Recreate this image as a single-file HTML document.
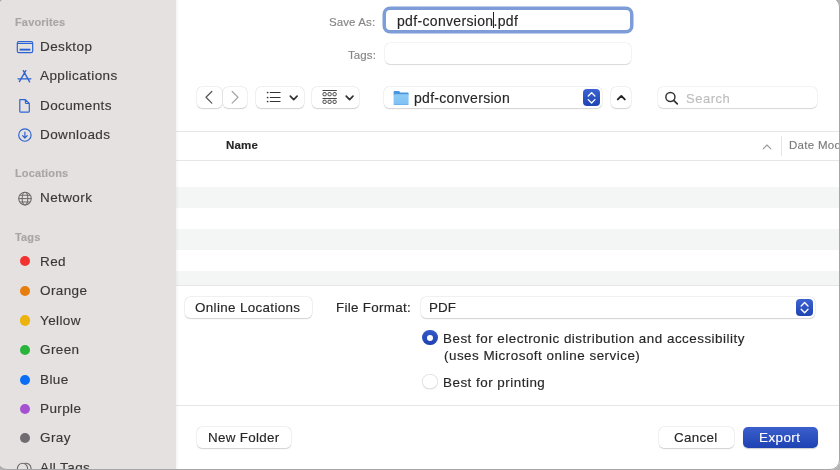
<!DOCTYPE html>
<html><head><meta charset="utf-8">
<style>
*{margin:0;padding:0;box-sizing:border-box}
html,body{width:840px;height:470px;overflow:hidden;background:#fff}
body{font-family:"Liberation Sans",sans-serif;position:relative}
.t{position:absolute;white-space:nowrap;will-change:transform;-webkit-text-stroke:0.15px currentColor}
.fld{position:absolute;background:#fff;border-radius:5px;box-shadow:0 0 0 0.5px rgba(0,0,0,0.07),0 0.7px 1px rgba(0,0,0,0.13)}
.btn{position:absolute;background:#fff;border-radius:5px;box-shadow:0 0 0 0.5px rgba(0,0,0,0.08),0 0.8px 1.2px rgba(0,0,0,0.15)}
.hl{position:absolute;left:176px;width:664px;height:1px;background:#e6e6e6}
.stripe{position:absolute;left:176px;width:664px;height:21px;background:#f4f5f5}
</style></head><body>
<div style="position:absolute;left:0;top:0;width:176px;height:470px;background:#e6e1e1"></div><div class="t" style="left:15.00px;top:17.19px;font-size:11px;line-height:11px;color:#a9a5a5;font-weight:bold;letter-spacing:0.15px;">Favorites</div>
<div class="t" style="left:15.00px;top:168.29px;font-size:11px;line-height:11px;color:#a9a5a5;font-weight:bold;letter-spacing:0.15px;">Locations</div>
<div class="t" style="left:15.00px;top:232.09px;font-size:11px;line-height:11px;color:#a9a5a5;font-weight:bold;letter-spacing:0.15px;">Tags</div>
<div class="t" style="left:39.50px;top:40.27px;font-size:13.5px;line-height:13.5px;color:#3b3737;font-weight:normal;letter-spacing:0.4px;">Desktop</div>
<div class="t" style="left:39.50px;top:69.37px;font-size:13.5px;line-height:13.5px;color:#3b3737;font-weight:normal;letter-spacing:0.4px;">Applications</div>
<div class="t" style="left:39.50px;top:98.97px;font-size:13.5px;line-height:13.5px;color:#3b3737;font-weight:normal;letter-spacing:0.4px;">Documents</div>
<div class="t" style="left:39.50px;top:128.37px;font-size:13.5px;line-height:13.5px;color:#3b3737;font-weight:normal;letter-spacing:0.4px;">Downloads</div>
<div class="t" style="left:39.50px;top:191.37px;font-size:13.5px;line-height:13.5px;color:#3b3737;font-weight:normal;letter-spacing:0.4px;">Network</div>
<div class="t" style="left:39.50px;top:254.57px;font-size:13.5px;line-height:13.5px;color:#3b3737;font-weight:normal;letter-spacing:0.4px;">Red</div>
<div style="position:absolute;left:19.6px;top:256.30px;width:10.2px;height:10.2px;border-radius:50%;background:#f2322e"></div><div class="t" style="left:39.50px;top:284.47px;font-size:13.5px;line-height:13.5px;color:#3b3737;font-weight:normal;letter-spacing:0.4px;">Orange</div>
<div style="position:absolute;left:19.6px;top:286.20px;width:10.2px;height:10.2px;border-radius:50%;background:#e77d0c"></div><div class="t" style="left:39.50px;top:313.67px;font-size:13.5px;line-height:13.5px;color:#3b3737;font-weight:normal;letter-spacing:0.4px;">Yellow</div>
<div style="position:absolute;left:19.6px;top:315.40px;width:10.2px;height:10.2px;border-radius:50%;background:#ebb30b"></div><div class="t" style="left:39.50px;top:343.27px;font-size:13.5px;line-height:13.5px;color:#3b3737;font-weight:normal;letter-spacing:0.4px;">Green</div>
<div style="position:absolute;left:19.6px;top:345.00px;width:10.2px;height:10.2px;border-radius:50%;background:#28b53a"></div><div class="t" style="left:39.50px;top:372.77px;font-size:13.5px;line-height:13.5px;color:#3b3737;font-weight:normal;letter-spacing:0.4px;">Blue</div>
<div style="position:absolute;left:19.6px;top:374.50px;width:10.2px;height:10.2px;border-radius:50%;background:#0b6cf6"></div><div class="t" style="left:39.50px;top:402.07px;font-size:13.5px;line-height:13.5px;color:#3b3737;font-weight:normal;letter-spacing:0.4px;">Purple</div>
<div style="position:absolute;left:19.6px;top:403.80px;width:10.2px;height:10.2px;border-radius:50%;background:#a54fd1"></div><div class="t" style="left:39.50px;top:431.37px;font-size:13.5px;line-height:13.5px;color:#3b3737;font-weight:normal;letter-spacing:0.4px;">Gray</div>
<div style="position:absolute;left:19.6px;top:433.10px;width:10.2px;height:10.2px;border-radius:50%;background:#706b71"></div><div class="t" style="left:39.50px;top:460.57px;font-size:13.5px;line-height:13.5px;color:#3b3737;font-weight:normal;letter-spacing:0.4px;">All Tags</div>

<svg style="position:absolute;left:16px;top:40px" width="18" height="14" viewBox="0 0 18 14"><rect x="1.3" y="1.6" width="15.4" height="11" rx="1.6" fill="none" stroke="#2b64d2" stroke-width="1.2"/><line x1="1.3" y1="3.5" x2="16.7" y2="3.5" stroke="#2b64d2" stroke-width="1"/><rect x="3.6" y="8.7" width="10.8" height="1.9" fill="#2b64d2"/></svg>
<svg style="position:absolute;left:16px;top:68px" width="18" height="16" viewBox="0 0 18 16"><path d="M7.3 2.6 L13.6 13.8 M9.8 2.6 L3.4 13.6 M2 10.8 H14.9" fill="none" stroke="#2b64d2" stroke-width="1.35" stroke-linecap="round"/></svg>
<svg style="position:absolute;left:17px;top:98px" width="16" height="17" viewBox="0 0 16 17"><path d="M2.8 1.6 H8.4 L12.3 5.5 V13.2 Q12.3 14.2 11.3 14.2 H3.8 Q2.8 14.2 2.8 13.2 Z M8.4 1.6 V4.5 Q8.4 5.5 9.4 5.5 H12.3" fill="none" stroke="#2b64d2" stroke-width="1.2" stroke-linejoin="round"/></svg>
<svg style="position:absolute;left:17px;top:128px" width="16" height="16" viewBox="0 0 16 16"><circle cx="7.9" cy="7.0" r="6.2" fill="none" stroke="#2b64d2" stroke-width="1.15"/><path d="M7.9 4.0 V10.0 M5.6 7.7 L7.9 10.0 L10.2 7.7" fill="none" stroke="#2b64d2" stroke-width="1.2" stroke-linecap="round" stroke-linejoin="round"/></svg>
<svg style="position:absolute;left:17px;top:191px" width="16" height="16" viewBox="0 0 16 16"><g fill="none" stroke="#6d6969" stroke-width="1.05"><circle cx="8" cy="7.6" r="6.3"/><ellipse cx="8" cy="7.6" rx="2.8" ry="6.3"/><line x1="1.7" y1="7.6" x2="14.3" y2="7.6"/><path d="M2.8 4.3 H13.2 M2.8 10.9 H13.2"/></g></svg>
<svg style="position:absolute;left:16px;top:461px" width="18" height="12" viewBox="0 0 18 12"><g fill="none" stroke="#6d6969" stroke-width="1.1"><circle cx="6.5" cy="7.4" r="5.1"/><path d="M8.25 2.6 A5.1 5.1 0 1 1 8.25 12.2"/></g></svg>
<div class="t" style="right:464.50px;top:16.67px;font-size:11.5px;line-height:11.5px;color:#858585;font-weight:normal;letter-spacing:0.1px;">Save As:</div>
<div class="t" style="right:464.50px;top:49.57px;font-size:11.5px;line-height:11.5px;color:#858585;font-weight:normal;letter-spacing:0.1px;">Tags:</div>
<div style="position:absolute;left:386px;top:10px;width:244px;height:20px;border-radius:4px;background:#fff;box-shadow:0 0 0 3.5px #7e9cd7"></div><div class="t" style="left:397.00px;top:13.85px;font-size:14px;line-height:14px;color:#262626;font-weight:normal;letter-spacing:0.33px;">pdf-conversion.pdf</div>
<div style="position:absolute;left:493px;top:12px;width:1px;height:16px;background:#222"></div><div class="fld" style="left:385.3px;top:42.5px;width:245.4px;height:21.9px"></div><div class="btn" style="left:197px;top:87px;width:24.5px;height:21.3px"></div><div class="btn" style="left:223px;top:87px;width:24.3px;height:21.3px"></div><svg style="position:absolute;left:197px;top:87px" width="51" height="22" viewBox="0 0 51 22"><path d="M14.8 4.5 L9 10.3 L14.8 16.1" fill="none" stroke="#5a5a5a" stroke-width="1.3" stroke-linecap="round" stroke-linejoin="round"/><path d="M35.2 4.5 L41 10.3 L35.2 16.1" fill="none" stroke="#a8a8a8" stroke-width="1.3" stroke-linecap="round" stroke-linejoin="round"/></svg><div class="btn" style="left:255.5px;top:87px;width:48px;height:21.2px"></div><svg style="position:absolute;left:255.5px;top:87px" width="48" height="22" viewBox="0 0 48 22"><g fill="#333"><circle cx="11.6" cy="5.5" r="0.85"/><circle cx="11.6" cy="10.5" r="0.85"/><circle cx="11.6" cy="14.5" r="0.85"/></g><g stroke="#333" stroke-width="1.05"><line x1="13.8" y1="5.5" x2="24.5" y2="5.5"/><line x1="13.8" y1="10.5" x2="24.5" y2="10.5"/><line x1="13.8" y1="14.5" x2="24.5" y2="14.5"/></g><path d="M34.3 9.2 L37.7 12.6 L41.1 9.2" fill="none" stroke="#333" stroke-width="1.7" stroke-linecap="round" stroke-linejoin="round"/></svg><div class="btn" style="left:311.7px;top:87px;width:47.6px;height:21.2px"></div><svg style="position:absolute;left:311.7px;top:87px" width="48" height="22" viewBox="0 0 48 22"><g fill="none" stroke="#333" stroke-width="0.9"><line x1="10.5" y1="3.5" x2="24.8" y2="3.5"/><line x1="10.5" y1="11.5" x2="24.8" y2="11.5"/><rect x="11" y="5.6" width="3.2" height="3.2" rx="1"/><rect x="16" y="5.6" width="3.2" height="3.2" rx="1"/><rect x="21" y="5.6" width="3.2" height="3.2" rx="1"/><rect x="11" y="13.2" width="3.2" height="3.2" rx="1"/><rect x="16" y="13.2" width="3.2" height="3.2" rx="1"/><rect x="21" y="13.2" width="3.2" height="3.2" rx="1"/></g><path d="M34.2 9.2 L37.6 12.6 L41 9.2" fill="none" stroke="#333" stroke-width="1.7" stroke-linecap="round" stroke-linejoin="round"/></svg><div class="btn" style="left:384.2px;top:87.3px;width:217.6px;height:21px"></div><svg style="position:absolute;left:393px;top:90px" width="17" height="16" viewBox="0 0 17 16"><defs><linearGradient id="fg" x1="0" y1="0" x2="0" y2="1"><stop offset="0" stop-color="#8ecbf6"/><stop offset="0.85" stop-color="#80c2f4"/><stop offset="1" stop-color="#62aaea"/></linearGradient></defs><path d="M0.6 2 Q0.6 1 1.6 1 H5.6 Q6.2 1 6.6 1.5 L7.4 2.4 H14.6 Q15.6 2.4 15.6 3.4 V5 H0.6 Z" fill="#4b95df"/><rect x="0.6" y="4.3" width="15" height="10.8" rx="0.9" fill="url(#fg)"/></svg><div class="t" style="left:414.00px;top:90.85px;font-size:14px;line-height:14px;color:#262626;font-weight:normal;letter-spacing:0.3px;">pdf-conversion</div>
<div style="position:absolute;left:582.9px;top:89.2px;width:17.1px;height:17.1px;border-radius:4px;background:linear-gradient(#3c63d2,#1f44b4)"></div><svg style="position:absolute;left:582.9px;top:89.2px" width="18" height="18" viewBox="0 0 18 18"><path d="M5.3 7 L8.6 3.6 L11.9 7 M5.3 10.6 L8.6 14 L11.9 10.6" fill="none" stroke="#fff" stroke-width="1.35" stroke-linecap="round" stroke-linejoin="round"/></svg><div class="btn" style="left:610.8px;top:87.1px;width:20.5px;height:21.2px"></div><svg style="position:absolute;left:610.8px;top:87.1px" width="21" height="22" viewBox="0 0 21 22"><path d="M6.8 12.4 L10.3 8.9 L13.8 12.4" fill="none" stroke="#222" stroke-width="1.9" stroke-linecap="round" stroke-linejoin="round"/></svg><div class="fld" style="left:657.5px;top:87.4px;width:159.5px;height:20.9px"></div><svg style="position:absolute;left:660px;top:88px" width="22" height="20" viewBox="0 0 22 20"><circle cx="10.4" cy="9" r="4.55" fill="none" stroke="#333" stroke-width="1.45"/><line x1="13.7" y1="12.3" x2="17.3" y2="15.9" stroke="#333" stroke-width="1.7" stroke-linecap="round"/></svg><div class="t" style="left:686.00px;top:91.60px;font-size:13px;line-height:13px;color:#bdbdbd;font-weight:normal;letter-spacing:0.5px;">Search</div>
<div class="hl" style="top:130.6px"></div><div class="t" style="left:226.00px;top:139.67px;font-size:11.5px;line-height:11.5px;color:#262626;font-weight:bold;letter-spacing:0.2px;">Name</div>
<svg style="position:absolute;left:760px;top:140px" width="14" height="12" viewBox="0 0 14 12"><path d="M3.2 8.8 L7 5 L10.8 8.8" fill="none" stroke="#9a9a9a" stroke-width="1.1" stroke-linecap="round" stroke-linejoin="round"/></svg><div style="position:absolute;left:780.5px;top:136.4px;width:1px;height:19.3px;background:#e5e5e5"></div><div class="t" style="left:789.00px;top:139.87px;font-size:11.5px;line-height:11.5px;color:#7a7a7a;font-weight:normal;letter-spacing:0.3px;">Date Modified</div>
<div class="hl" style="top:160px"></div><div class="stripe" style="top:187px"></div><div class="stripe" style="top:229px"></div><div class="stripe" style="top:271px;height:14px"></div><div class="hl" style="top:285px"></div><div class="btn" style="left:184.5px;top:296.7px;width:127.2px;height:21.3px"></div><div class="t" style="left:195.00px;top:300.86px;font-size:13.4px;line-height:13.4px;color:#262626;font-weight:normal;letter-spacing:0.35px;">Online Locations</div>
<div class="t" style="right:428.50px;top:300.86px;font-size:13.4px;line-height:13.4px;color:#262626;font-weight:normal;letter-spacing:0.3px;">File Format:</div>
<div class="btn" style="left:420.5px;top:296.5px;width:394.5px;height:21.6px"></div><div class="t" style="left:429.00px;top:300.86px;font-size:13.4px;line-height:13.4px;color:#262626;font-weight:normal;letter-spacing:0.05px;">PDF</div>
<div style="position:absolute;left:796px;top:298.75px;width:17.2px;height:17.1px;border-radius:4px;background:linear-gradient(#3c63d2,#1f44b4)"></div><svg style="position:absolute;left:796px;top:298.75px" width="18" height="18" viewBox="0 0 18 18"><path d="M5.2 7 L8.6 3.5 L12 7 M5.2 10.3 L8.6 13.8 L12 10.3" fill="none" stroke="#fff" stroke-width="1.35" stroke-linecap="round" stroke-linejoin="round"/></svg><div style="position:absolute;left:422.3px;top:330.1px;width:15.4px;height:15.4px;border-radius:50%;background:linear-gradient(#3459c8,#1f42b0)"></div><div style="position:absolute;left:426.8px;top:334.6px;width:6.4px;height:6.4px;border-radius:50%;background:#fff"></div><div style="position:absolute;left:422.3px;top:374.1px;width:15.4px;height:15.4px;border-radius:50%;background:#fff;box-shadow:inset 0 0 0 0.7px rgba(0,0,0,0.13),0 0.6px 1px rgba(0,0,0,0.1)"></div><div class="t" style="left:443.30px;top:332.06px;font-size:13.4px;line-height:13.4px;color:#262626;font-weight:normal;letter-spacing:0.5px;">Best for electronic distribution and accessibility</div>
<div class="t" style="left:443.60px;top:348.56px;font-size:13.4px;line-height:13.4px;color:#262626;font-weight:normal;letter-spacing:0.5px;">(uses Microsoft online service)</div>
<div class="t" style="left:443.30px;top:375.86px;font-size:13.4px;line-height:13.4px;color:#262626;font-weight:normal;letter-spacing:0.5px;">Best for printing</div>
<div class="hl" style="top:405px"></div><div class="btn" style="left:197.2px;top:426.8px;width:94.2px;height:21.2px"></div><div class="t" style="left:207.50px;top:430.96px;font-size:13.4px;line-height:13.4px;color:#262626;font-weight:normal;letter-spacing:0.3px;">New Folder</div>
<div class="btn" style="left:658.6px;top:426.8px;width:75.3px;height:21.4px"></div><div class="t" style="left:674.00px;top:430.96px;font-size:13.4px;line-height:13.4px;color:#262626;font-weight:normal;letter-spacing:0.3px;">Cancel</div>
<div style="position:absolute;left:742.5px;top:426.8px;width:75.6px;height:21.2px;border-radius:5px;background:linear-gradient(#3b5fcc,#1f42b3);box-shadow:0 0.5px 1px rgba(0,0,0,0.2)"></div><div class="t" style="left:758.80px;top:430.96px;font-size:13.4px;line-height:13.4px;color:#ffffff;font-weight:normal;letter-spacing:0.45px;">Export</div>
<div style="position:absolute;left:176px;top:0;width:3px;height:470px;background:linear-gradient(to right,rgba(0,0,0,0.045),rgba(0,0,0,0))"></div><svg style="position:absolute;left:0;top:0" width="840" height="470" viewBox="0 0 840 470"><path fill-rule="evenodd" fill="#b3b3b3" d="M-5 -5H845V475H-5Z M8 -2 H830 A10 10 0 0 1 840 8 V460 A10 10 0 0 1 830 470 H8 A10 10 0 0 1 -2 460 V8 A10 10 0 0 1 8 -2 Z"/><rect x="-2.5" y="-2.5" width="842" height="472" rx="9.5" ry="9.5" fill="none" stroke="#a6a6a6" stroke-width="1"/></svg>
</body></html>
